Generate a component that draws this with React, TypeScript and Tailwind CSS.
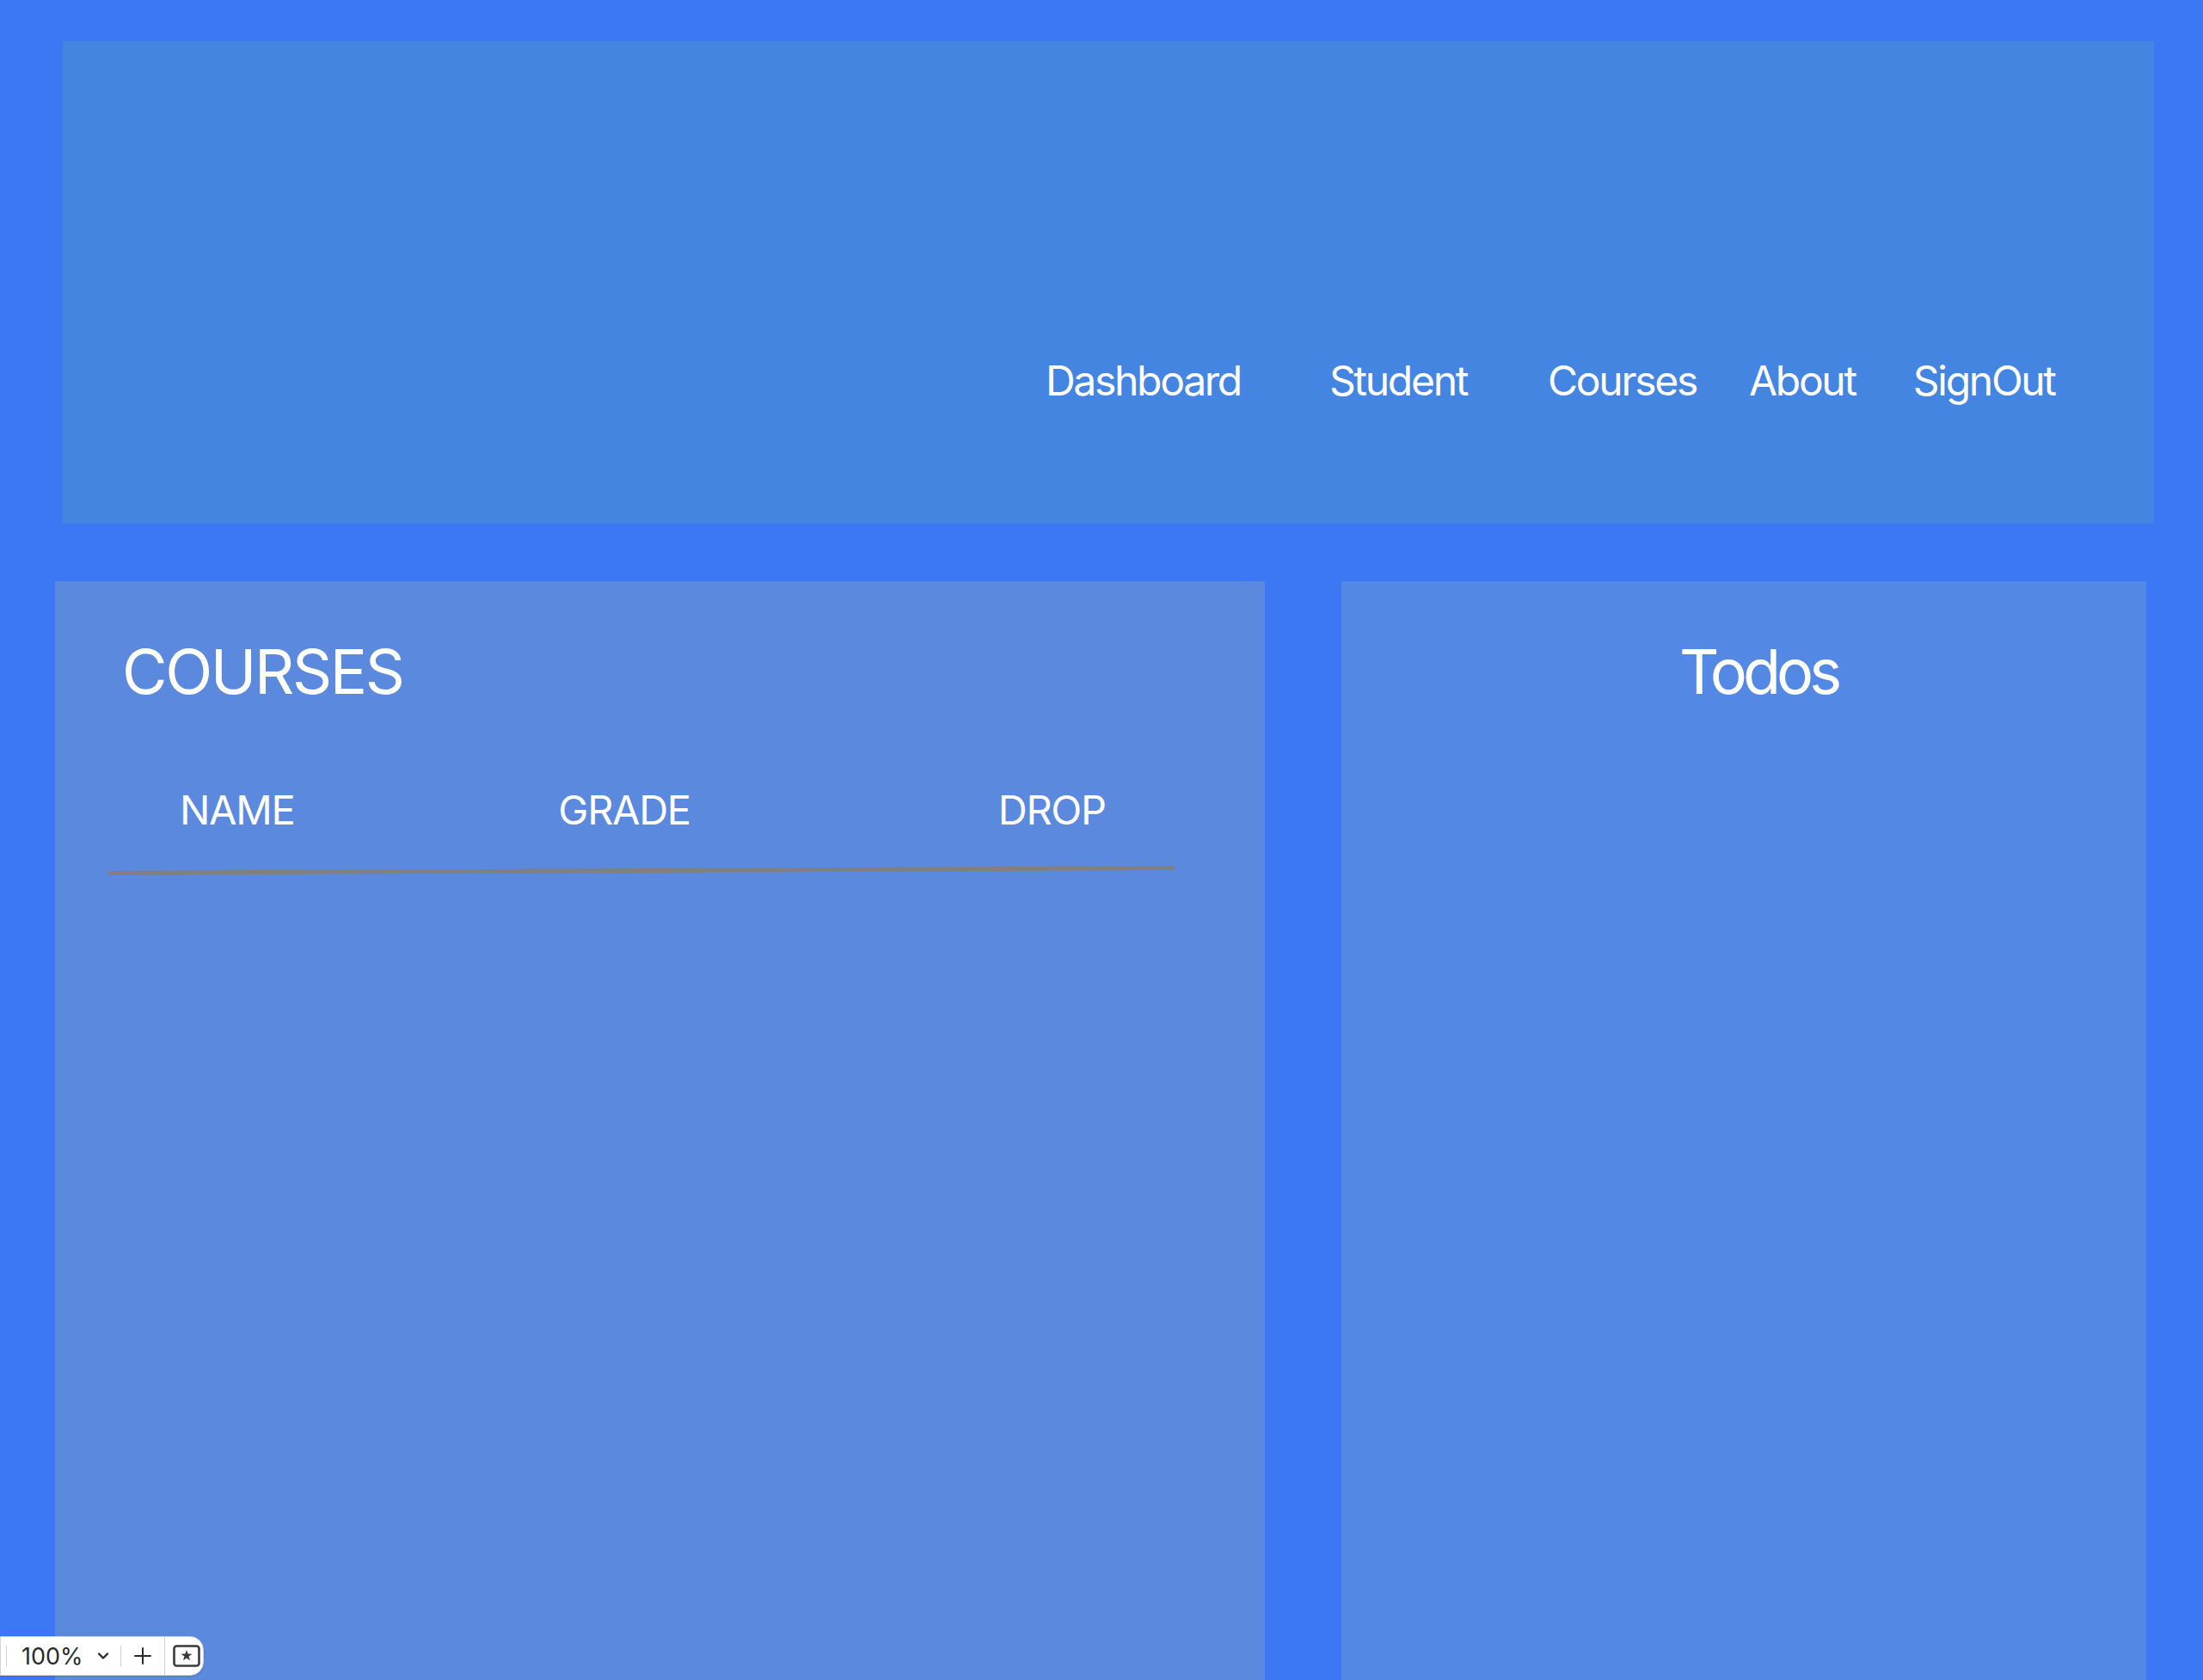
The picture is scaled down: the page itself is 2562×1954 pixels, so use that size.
import React from 'react';

const navLinks = [
  { label: 'Dashboard', ml: 'ml-0' },
  { label: 'Student', ml: 'ml-[103px]' },
  { label: 'Courses', ml: 'ml-[94px]' },
  { label: 'About', ml: 'ml-[61px]' },
  { label: 'SignOut', ml: 'ml-[67px]' },
];

function ZoomWidget() {
  return (
    <div className="absolute left-0 bottom-[5px] h-[46px] w-[237px] bg-white rounded-r-[16px] border border-[#d4d4d4] shadow-sm flex items-center text-[#2a2a2a]">
      <div className="w-px h-[24px] bg-[#d0d0d0] ml-[6px]" />
      <span className="ml-[17px] text-[27px] leading-none">100%</span>
      <svg className="ml-[16px]" width="14" height="10" viewBox="0 0 14 10" fill="none">
        <path d="M2 2.5 L7 7.5 L12 2.5" stroke="#2a2a2a" strokeWidth="2.4" strokeLinecap="round" strokeLinejoin="round" />
      </svg>
      <div className="w-px h-[24px] bg-[#d0d0d0] ml-[13px]" />
      <svg className="ml-[14px]" width="22" height="22" viewBox="0 0 22 22" fill="none">
        <path d="M11 2 V20 M2 11 H20" stroke="#2a2a2a" strokeWidth="2" strokeLinecap="round" />
      </svg>
      <div className="w-px h-[44px] bg-[#d0d0d0] ml-[14px]" />
      <svg className="ml-[9px]" width="32" height="26" viewBox="0 0 32 26" fill="none">
        <rect x="1.5" y="1.5" width="29" height="23" rx="3" stroke="#3a3a3a" strokeWidth="2.6" />
        <path d="M16 6 L17.6 10.6 L22.5 10.7 L18.6 13.6 L20 18.3 L16 15.5 L12 18.3 L13.4 13.6 L9.5 10.7 L14.4 10.6 Z" fill="#3a3a3a" />
      </svg>
    </div>
  );
}

export default function App() {
  return (
    <div
      className="relative min-h-screen h-[1954px] overflow-hidden bg-[#3c78f4] text-white"
      style={{ fontFamily: 'Inter, "Noto Sans", sans-serif' }}
    >
      {/* Header */}
      <header className="ml-[73px] mr-[57px] relative top-[48px] h-[561px] bg-[#4485e1]">
        <nav className="flex pt-[371px] pl-[1143px] text-[48px] leading-none tracking-[-2.3px]">
          {navLinks.map((l) => (
            <a key={l.label} href="#" className={l.ml}>
              {l.label}
            </a>
          ))}
        </nav>
      </header>

      {/* Main */}
      <main className="flex mt-[115px] pl-[64px]">
        <section className="w-[1407px] h-[1278px] bg-[#5b89de]">
          <h1 className="pt-[69px] pl-[78px] text-[72px] leading-none tracking-[-2.4px]">COURSES</h1>
          <div className="mt-[101px] pl-[62px] w-[1302px]">
            <div className="flex text-[47px] leading-none tracking-[-1.3px]">
              <span className="ml-[83px]">NAME</span>
              <span className="ml-[307px]">GRADE</span>
              <span className="ml-[358px]">DROP</span>
            </div>
            <div className="mt-[48px] h-[5px] w-[1240px] bg-[#808080] origin-left rotate-[-0.28deg]" />
          </div>
        </section>
        <section className="ml-[89px] w-[936px] h-[1278px] bg-[#5389e4]">
          <h2 className="pt-[69px] pl-[393px] text-[72px] leading-none tracking-[-5px]">Todos</h2>
        </section>
      </main>

      <ZoomWidget />
    </div>
  );
}
